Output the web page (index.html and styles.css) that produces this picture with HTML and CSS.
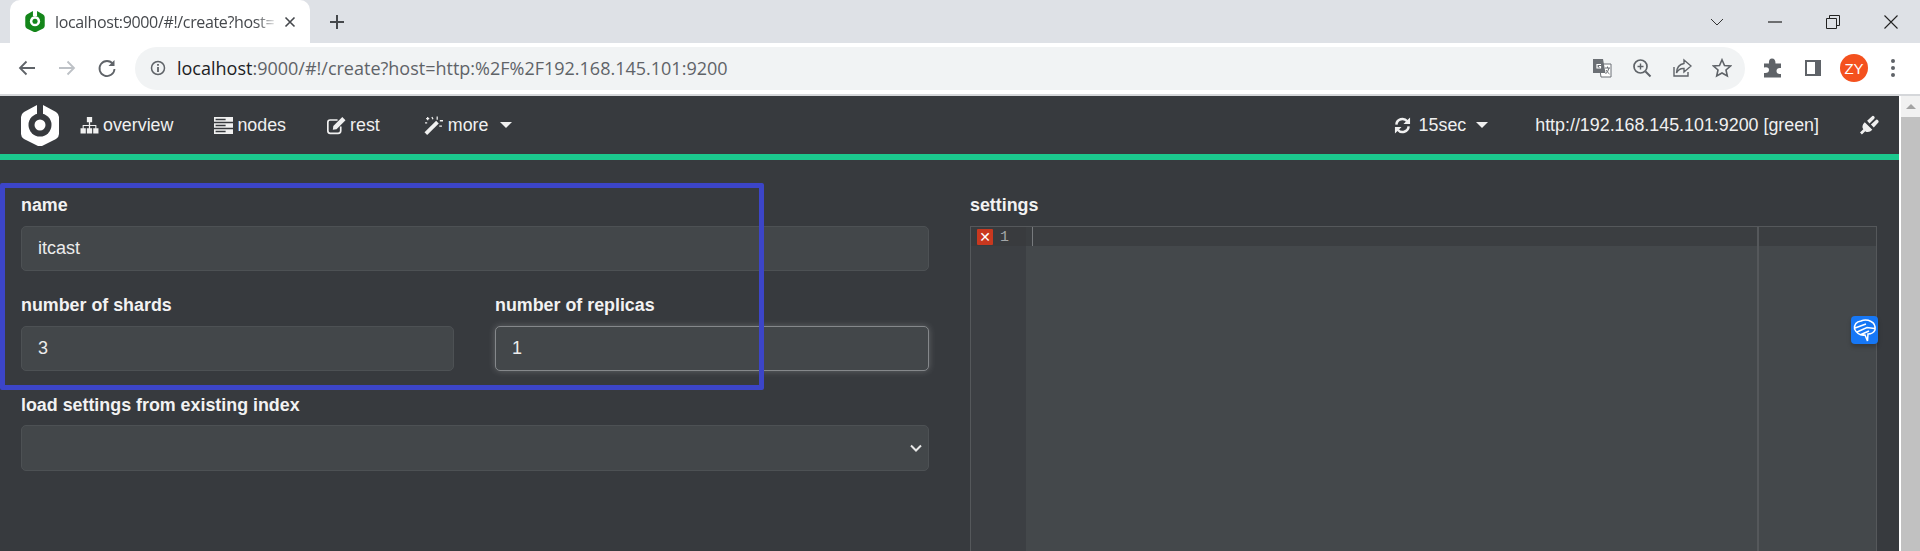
FILE: index.html
```html
<!DOCTYPE html>
<html lang="en">
<head>
<meta charset="utf-8">
<title>localhost:9000</title>
<link rel="stylesheet" href="styles.css">
</head>
<body>
<header class="chrome">
  <div class="tabstrip">
    <div class="tab">
      <svg class="favicon" viewBox="0 0 38 41"><path fill="#14861a" d="M15 0 3 7Q0 9 0 12V29Q0 32 3 34L17 41Q19 42 21 41L35 34Q38 32 38 29V12Q38 9 35 7L23 0V10H15Z"/><circle cx="19" cy="20" r="10" fill="#fff"/><circle cx="19" cy="20" r="5" fill="#14861a"/></svg>
      <span class="tab-title">localhost:9000/#!/create?host=</span>
      <svg class="tab-close" viewBox="0 0 12 12"><path d="M1.500 1.500 10.500 10.500M10.500 1.500 1.500 10.500" stroke="#45484c" stroke-width="1.600" fill="none"/></svg>
    </div>
    <svg class="new-tab" viewBox="0 0 16 16"><path d="M8 1V15M1 8H15" stroke="#45484c" stroke-width="2" fill="none"/></svg>
    <div class="window-controls">
      <svg class="win-btn" viewBox="0 0 14 14"><path d="M1 4 7 10 13 4" stroke="#333" fill="none"/></svg>
      <svg class="win-btn" viewBox="0 0 14 14"><path d="M0 7H14" stroke="#222" stroke-width="1.200" fill="none"/></svg>
      <svg class="win-btn" viewBox="0 0 14 14"><path d="M.5 3.500H10.500V13.500H.5ZM3.500 3.500V.5H13.500V10.500H10.500" stroke="#222" fill="none"/></svg>
      <svg class="win-btn" viewBox="0 0 14 14"><path d="M.5.5 13.500 13.500M13.500.5.5 13.500" stroke="#222" stroke-width="1.100" fill="none"/></svg>
    </div>
  </div>
  <div class="toolbar">
    <svg class="tool" viewBox="0 0 20 20"><path d="M18 10H3M9.500 3.500 3 10 9.500 16.500" stroke="#5f6368" stroke-width="1.800" fill="none"/></svg>
    <svg class="tool" viewBox="0 0 20 20"><path d="M2 10H17M10.500 3.500 17 10 10.500 16.500" stroke="#bdc1c6" stroke-width="1.800" fill="none"/></svg>
    <svg class="tool" viewBox="0 0 20 20"><path d="M16 6A7.500 7.500 0 1 0 17.500 11" stroke="#5f6368" stroke-width="1.800" fill="none"/><path d="M17.500 2V8H11.500Z" fill="#5f6368"/></svg>
    <div class="omnibox">
      <svg class="info" viewBox="0 0 16 16"><circle cx="8" cy="8" r="6.500" stroke="#5f6368" stroke-width="1.500" fill="none"/><path d="M7.100 7H8.900V12H7.100ZM7.100 4H8.900V5.800H7.100Z" fill="#5f6368"/></svg>
      <span class="url"><span class="url-host">localhost</span>:9000/#!/create?host=http:%2F%2F192.168.145.101:9200</span>
      <div class="omni-icons">
        <svg class="omni-icon" viewBox="0 0 20 20"><path d="M7 6H19V19H9Z" fill="#fff" stroke="#6b6f74"/><path d="M1 1H11L13.500 15H1Z" fill="#6b6f74"/><path d="M9 6.500H5V10H8.500V8.500H7" stroke="#fff" stroke-width="1.200" fill="none"/><path d="M13 10H18M15.500 8.500V10M17 10Q16 14 13.500 16M14 12Q15.500 14.500 17.500 16" stroke="#6b6f74" fill="none"/></svg>
        <svg class="omni-icon" viewBox="0 0 20 20"><circle cx="8.500" cy="8.500" r="6.500" stroke="#5f6368" stroke-width="1.700" fill="none"/><path d="M13.500 13.500 18.500 18.500" stroke="#5f6368" stroke-width="2" fill="none"/><path d="M5.500 8.500H11.500M8.500 5.500V11.500" stroke="#5f6368" stroke-width="1.400" fill="none"/></svg>
        <svg class="omni-icon" viewBox="0 0 20 20"><path d="M2 9V18H16V14" stroke="#5f6368" stroke-width="1.400" fill="none"/><path d="M12 2 19 8 12 14V10.500Q7 10 4.500 15Q5 6.500 12 5.500Z" stroke="#5f6368" stroke-width="1.400" fill="none"/></svg>
        <svg class="omni-icon" viewBox="0 0 20 20"><path d="M10 1.800 12.500 7.500 18.500 8 14 12 15.300 18 10 15 4.700 18 6 12 1.500 8 7.500 7.500Z" stroke="#5f6368" stroke-width="1.600" fill="none"/></svg>
      </div>
    </div>
    <div class="ext-icons">
      <svg class="ext puzzle" viewBox="0 0 20 20"><path d="M1 5.500H6Q5.500 .5 9 .5T12.500 5.500H18V10Q13.500 9.500 13.500 13T18 16V19.500H1V15Q6 15.500 6 12T1 9.500Z" fill="#5f6368"/></svg>
      <svg class="ext panel" viewBox="0 0 20 20"><path d="M2 2H18V18H2ZM4 4V16H12V4Z" fill="#5f6368" fill-rule="evenodd"/></svg>
      <div class="avatar">ZY</div>
      <svg class="ext dots" viewBox="0 0 4 20"><circle cx="2" cy="3" r="2" fill="#5f6368"/><circle cx="2" cy="10" r="2" fill="#5f6368"/><circle cx="2" cy="17" r="2" fill="#5f6368"/></svg>
    </div>
  </div>
</header>

<div class="viewport">
  <main class="page">
    <nav class="navbar">
      <svg class="logo" viewBox="0 0 38 41"><path fill="#fff" d="M16 0 3 7Q0 9 0 12V29Q0 32 3 34L17 41Q19 42 21 41L35 34Q38 32 38 29V12Q38 9 35 7L22 0V10H16Z"/><circle cx="19" cy="20" r="11.500" fill="#373a3e"/><rect x="16" y="0" width="6" height="11" fill="#373a3e"/><circle cx="19" cy="20" r="5.500" fill="#fff"/></svg>
      <a class="nav-item"><svg class="nav-icon" viewBox="0 0 18 18"><path d="M6.500 1H11.500V6H9.600V8.500H15.500V11.500H17.500V16.500H12.500V11.500H14.500V9.500H9.600V11.500H11.500V16.500H6.500V11.500H8.400V9.500H3.500V11.500H5.500V16.500H.5V11.500H2.500V8.500H8.400V6H6.500Z" fill="#f0f0f0"/></svg>overview</a>
      <a class="nav-item"><svg class="nav-icon" viewBox="0 0 18 18"><path d="M0 1H18V5.500H0ZM0 6.800H18V11.200H0ZM0 12.500H18V17H0Z" fill="#f0f0f0"/><path d="M1.500 2.500H11V4H1.500ZM1.500 8.300H11V9.800H1.500ZM1.500 14H11V15.500H1.500Z" fill="#373a3e"/></svg>nodes</a>
      <a class="nav-item"><svg class="nav-icon" viewBox="0 0 18 18"><path d="M13 10V14Q13 16.500 10.500 16.500H3Q.8 16.500 .8 14V6Q.8 3.800 3 3.800H10" stroke="#f0f0f0" stroke-width="1.600" fill="none"/><path d="M6 9.500 14.500 1 17.500 4 9 12.500 5.500 13Z" fill="#f0f0f0"/></svg>rest</a>
      <a class="nav-item nav-more"><svg class="nav-icon" viewBox="0 0 18 18"><path d="M.5 15.500 11.500 4.500 14 7 3 18Z" fill="#f0f0f0"/><path d="M3.500 1V4M2 2.500H5M1 6.500H3M7.500 1 8.500 3M12.500 .5V3.500M15 4.500H18M14.500 9.500H17" stroke="#f0f0f0" stroke-width="1.200" fill="none"/></svg>more<span class="caret"></span></a>
      <div class="nav-spacer"></div>
      <a class="nav-item nav-refresh"><svg class="nav-icon refresh" viewBox="0 0 18 18"><path d="M2.500 8A6.500 6.500 0 0 1 14 4.500M15.500 10A6.500 6.500 0 0 1 4 13.500" stroke="#f0f0f0" stroke-width="2.600" fill="none"/><path d="M17 .5V7.500H10ZM1 17.500V10.500H8Z" fill="#f0f0f0"/></svg>15sec<span class="caret"></span></a>
      <span class="host-status">http://192.168.145.101:9200 [green]</span>
      <svg class="plug" viewBox="0 0 20 20"><path d="M5 7 13 15Q9 19 5.500 16.500L2 20 0 18 3.500 14.500Q1 11 5 7Z" fill="#f0f0f0"/><path d="M7.500 5.500 13 .5Q14 0 15 1 16 2 15 3.500L10 8.500ZM11.500 9.500 17 4.500Q18 4 19 5 20 6 19.500 7L14.500 12.500Z" fill="#f0f0f0"/></svg>
    </nav>
    <div class="status-bar"></div>
    <section class="content">
      <div class="form-col">
        <label class="field-label">name</label>
        <input class="text-input" value="itcast">
        <div class="shard-row">
          <div class="field">
            <label class="field-label">number of shards</label>
            <input class="text-input" value="3">
          </div>
          <div class="field">
            <label class="field-label">number of replicas</label>
            <input class="text-input is-focused" value="1">
          </div>
        </div>
        <label class="field-label">load settings from existing index</label>
        <div class="select-wrap">
          <select class="text-input select-input"><option></option></select>
          <svg class="chevron" viewBox="0 0 12 8"><path d="M1 1.500 6 6.500 11 1.500" stroke="#e8e8e8" stroke-width="2" fill="none"/></svg>
        </div>
      </div>
      <div class="settings-col">
        <label class="field-label">settings</label>
        <div class="editor">
          <div class="gutter">
            <div class="gutter-active"><span class="err-mark">✕</span><span class="line-no">1</span></div>
          </div>
          <div class="code">
            <div class="active-line"><span class="cursor"></span></div>
            <div class="print-margin"></div>
          </div>
        </div>
      </div>
      <div class="highlight-box"></div>
      <svg class="brain" viewBox="0 0 27 28"><rect width="27" height="28" rx="4" fill="#1677f5"/><path d="M3.500 13Q3 6 10 5 15 3 20 5.500 25 8 24 14 22 18 17 18L16.500 25 14 19Q7 20 3.500 13ZM4 12 15 8M6 16 16 11.500 23.500 12.500M10 18.500 18 15" stroke="#fff" stroke-width="1.500" fill="none"/></svg>
    </section>
  </main>
  <aside class="scrollbar">
    <span class="sb-arrow"></span>
    <div class="sb-thumb"></div>
  </aside>
</div>
</body>
</html>
```
FILE: styles.css
```css
* { box-sizing: border-box; }
html, body { margin: 0; padding: 0; height: 100%; overflow: hidden; }
body { font-family: "Liberation Sans", Arial, sans-serif; background: #373a3e; display: flex; flex-direction: column; }

.chrome { flex: none; }
.tabstrip { height: 43px; background: #dee1e6; display: flex; align-items: center; padding-left: 10px; }
.tab { width: 300px; height: 43px; background: #fff; border-radius: 10px 10px 0 0; display: flex; align-items: center; padding-left: 15px; padding-right: 14px; }
.favicon { width: 20px; height: 21px; flex: none; }
.tab-title { flex: 1; margin-left: 10px; font: 16px "Open Sans", sans-serif; color: #45484c; white-space: nowrap; -webkit-mask-image: linear-gradient(90deg, #000 90%, transparent 100%); mask-image: linear-gradient(90deg, #000 90%, transparent 100%); letter-spacing: -0.35px; }
.tab-close { width: 12px; height: 12px; margin-left: 6px; flex: none; }
.new-tab { width: 16px; height: 16px; margin-left: 19px; flex: none; }
.window-controls { margin-left: auto; display: flex; align-items: center; gap: 44px; padding-right: 22px; }
.win-btn { width: 14px; height: 14px; display: block; }

.toolbar { height: 53px; background: #fff; border-bottom: 2px solid #d5d7da; display: flex; align-items: center; padding-left: 17px; padding-bottom: 1px; }
.tool { width: 20px; height: 20px; margin-right: 20px; flex: none; }
.omnibox { width: 1610px; height: 43px; margin-left: -2px; background: #f1f3f4; border-radius: 22px; display: flex; align-items: center; padding-left: 15px; }
.info { width: 16px; height: 16px; flex: none; }
.url { margin-left: 11px; font: 18px "Open Sans", sans-serif; color: #5f6368; white-space: nowrap; }
.url-host { color: #202124; }
.omni-icons { margin-left: auto; display: flex; gap: 20px; padding-right: 13px; }
.omni-icon { width: 20px; height: 20px; display: block; }
.ext-icons { display: flex; align-items: center; margin-left: 17px; }
.ext { width: 20px; height: 20px; flex: none; }
.puzzle { margin: 0 20px 0 1px; }
.panel { margin-right: 17px; }
.avatar { width: 28px; height: 28px; border-radius: 50%; background: #f4511e; color: #fff; font: 15px "Liberation Sans", sans-serif; display: flex; align-items: center; justify-content: center; }
.ext.dots { width: 4px; margin-left: 23px; }

.viewport { flex: 1; min-height: 0; display: flex; }
.page { width: 1899px; flex: none; background: #373a3e; color: #f0f0f0; }
.navbar { height: 58px; display: flex; align-items: center; padding-left: 21px; padding-right: 20px; font-size: 17.85px; }
.logo { width: 38px; height: 41px; flex: none; margin-right: 21px; }
.nav-item { display: flex; align-items: center; margin-right: 41px; white-space: nowrap; }
.nav-icon { width: 19px; height: 19px; margin-right: 4px; flex: none; }
.caret { width: 0; height: 0; margin-left: 12px; border-left: 6px solid transparent; border-right: 6px solid transparent; border-top: 6px solid #f0f0f0; }
.nav-more { margin-left: 3px; }
.nav-more .nav-icon { margin-right: 5px; }
.nav-spacer { flex: 1; }
.nav-refresh { margin-right: 47px; }
.nav-refresh .caret { margin-left: 10px; }
.nav-icon.refresh { width: 17px; height: 17px; margin-right: 8px; }
.host-status { white-space: nowrap; }
.plug { width: 19px; height: 20px; margin-left: 41px; flex: none; }
.status-bar { height: 6px; background: #1bc98e; }

.content { position: relative; display: grid; grid-template-columns: 908px 907px; column-gap: 41px; padding: 33px 22px 0 21px; }
.field-label { display: block; font-weight: 700; font-size: 17.85px; line-height: 24px; margin-bottom: 9px; color: #f2f2f2; }
.text-input { display: block; width: 100%; height: 45px; padding: 0 16px; font: 18px "Liberation Sans", sans-serif; color: #ececec; background: #43474a; border: 1px solid #4d5154; border-radius: 5px; outline: none; }
.shard-row { display: grid; grid-template-columns: 433px 434px; column-gap: 41px; margin: 22px 0; }
.is-focused { border-color: #85888b; box-shadow: 0 0 7px rgba(255, 255, 255, .22); }
.select-wrap { position: relative; margin-top: -1px; }
.select-input { appearance: none; -webkit-appearance: none; height: 46px; }
.chevron { position: absolute; right: 7px; top: 19px; width: 12px; height: 8px; }

.editor { height: 325px; display: flex; border: 1px solid #55585b; border-bottom: 0; background: #44484b; }
.gutter { width: 55px; flex: none; background: #3c3f43; }
.gutter-active { height: 19px; background: #393b3e; display: flex; align-items: center; padding-left: 6px; }
.err-mark { width: 16px; height: 16px; background: #c9381f; color: #fff; font: bold 14px/16px "DejaVu Sans", sans-serif; text-align: center; border-radius: 1px; }
.line-no { margin-left: 7px; padding-top: 1px; font: 15px "Liberation Mono", monospace; color: #a3a6a8; }
.code { flex: 1; position: relative; }
.active-line { height: 19px; background: #3b3e41; padding-left: 6px; }
.cursor { display: block; width: 1px; height: 19px; background: #777a7d; }
.print-margin { position: absolute; left: 731px; top: 0; bottom: 0; width: 2px; background: #55585b; }

.highlight-box { position: absolute; left: 0; top: 23px; width: 764px; height: 207px; border: 5px solid #3c45c8; border-radius: 2px; pointer-events: none; }
.brain { position: absolute; left: 1851px; top: 156px; width: 27px; height: 28px; filter: drop-shadow(0 3px 2px rgba(0, 0, 0, .2)); }

.scrollbar { flex: 1; background: #f1f1f1; border-left: 2px solid #fff; display: flex; flex-direction: column; align-items: center; overflow: hidden; }
.sb-arrow { flex: none; margin-top: 8px; width: 0; height: 0; border-left: 5px solid transparent; border-right: 5px solid transparent; border-bottom: 5px solid #a3a3a3; }
.sb-thumb { flex: 1; width: 100%; margin-top: 8px; background: #c1c1c1; }
```
